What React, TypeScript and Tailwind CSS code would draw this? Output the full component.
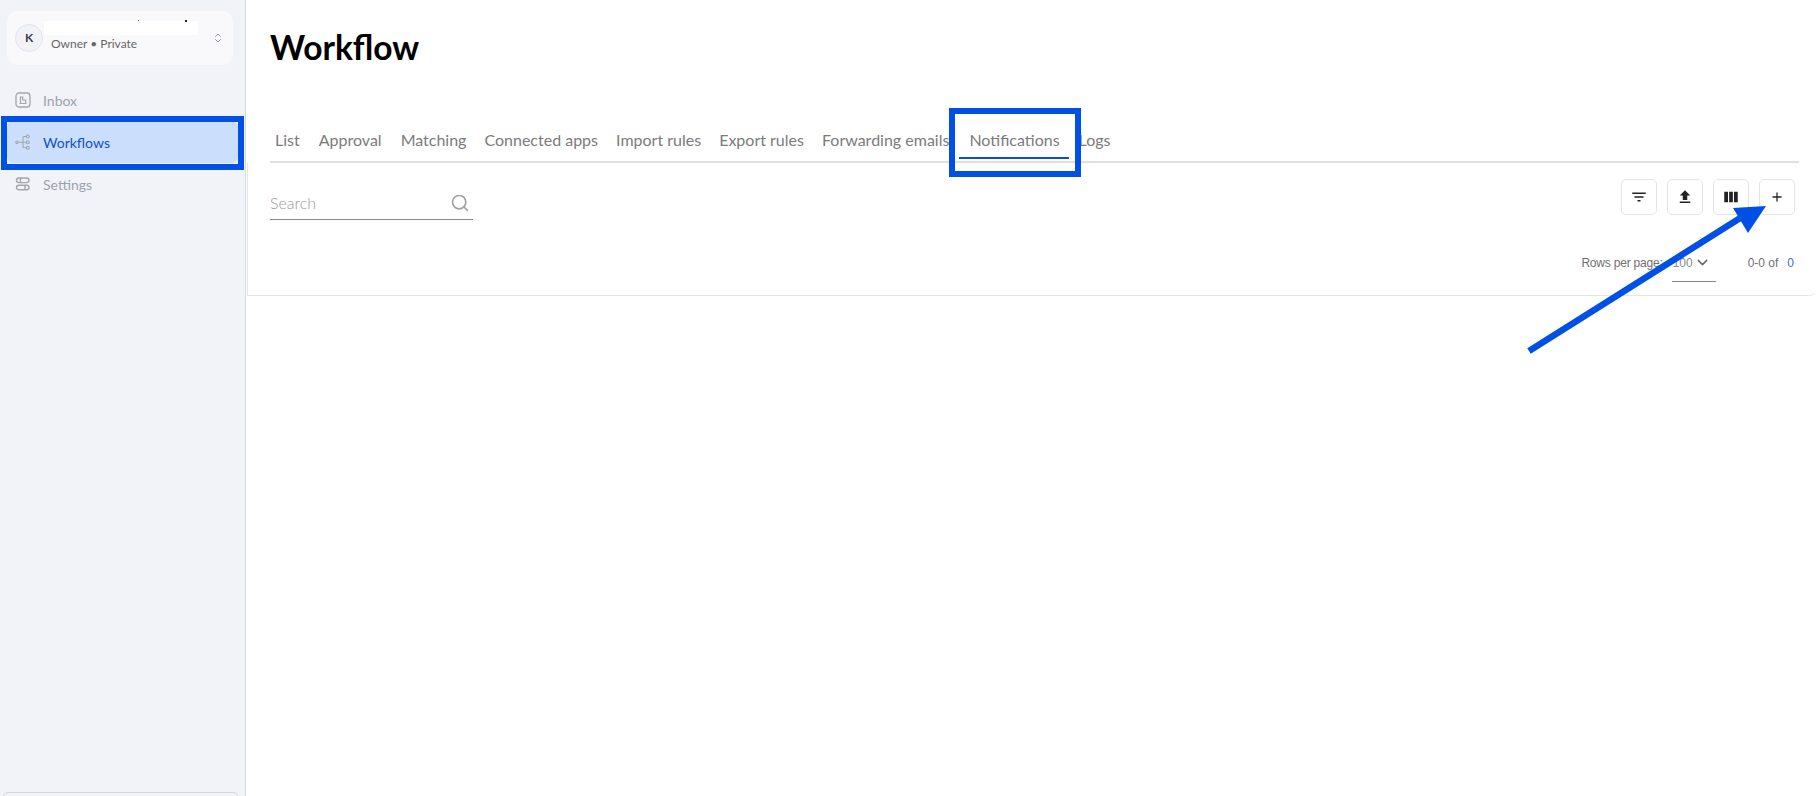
import { ChevronDown, ChevronsUpDown, Plus, Search } from 'lucide-react';

const tabs = [
  { label: 'List', ml: 'ml-[5px]' },
  { label: 'Approval', ml: 'ml-[19px]' },
  { label: 'Matching', ml: 'ml-[19px]' },
  { label: 'Connected apps', ml: 'ml-[18px]' },
  { label: 'Import rules', ml: 'ml-[18px]' },
  { label: 'Export rules', ml: 'ml-[18px]' },
  { label: 'Forwarding emails', ml: 'ml-[18px]' },
];

const InboxIcon = () => (
  <svg width="16" height="16" viewBox="0 0 16 16" fill="none" stroke="#a3a6ac">
    <rect x="1" y="1" width="14" height="14" rx="3" strokeWidth="1.3" />
    <path d="M4.5 11.5h7M5.5 11V5h2.2v3h3v3" strokeWidth="1.2" />
  </svg>
);

const FlowIcon = () => (
  <svg width="16" height="16" viewBox="0 0 16 16" fill="none" stroke="#a3a6ac" strokeWidth="1.1">
    <circle cx="2" cy="8.2" r="1.2" />
    <circle cx="12.8" cy="2.5" r="1.5" />
    <circle cx="12.8" cy="8.2" r="1.5" />
    <circle cx="12.8" cy="13.7" r="1.5" />
    <path d="M3.2 8.2h8.1M8 8.2V3.5a1 1 0 0 1 1-1h2.3M8 8.2v4.5a1 1 0 0 0 1 1h2.3" />
  </svg>
);

const SettingsIcon = () => (
  <svg width="16" height="16" viewBox="0 0 16 16" fill="none" stroke="#a3a6ac" strokeWidth="1.4">
    <rect x="1.5" y="2" width="12.5" height="4.6" rx="2.3" />
    <rect x="1.5" y="9.2" width="12.5" height="4.6" rx="2.3" />
    <path d="M5.5 2v4.6M10 9.2v4.6" />
  </svg>
);

const ToolButton = ({ children }: { children: React.ReactNode }) => (
  <button className="w-9 h-9 rounded-[5px] border border-[#e5e5e5] bg-white flex items-center justify-center text-[#222]">
    {children}
  </button>
);

export default function App() {
  return (
    <div className="relative flex w-[1816px] h-[796px] overflow-hidden bg-white font-['Lato',sans-serif]">
      <aside className="w-[246px] shrink-0 h-full bg-[#f2f3f8] border-r border-[#d5d7e0] pl-[7px] pr-[12px] pt-[11px] flex flex-col">
        <div className="h-[54px] rounded-[10px] bg-[#f9f9fb] flex items-center pl-2 pr-[9px]">
          <div className="w-7 h-7 rounded-full bg-[#f2f3f8] border border-[#e4e5eb] flex items-center justify-center text-[12px] font-bold text-[#374151] shrink-0">
            K
          </div>
          <div className="ml-2 flex-1 flex flex-col -mt-[4px]">
            <div className="relative h-[14px] w-[154px] -ml-[7px] bg-white">
              <span className="absolute left-[94px] -top-[1px] w-[1px] h-[1px] bg-[#888]" />
              <span className="absolute left-[141px] -top-[1px] w-[2px] h-[2px] bg-[#222]" />
            </div>
            <div className="text-[12px] leading-4 text-[#666] mt-[1px]">Owner • Private</div>
          </div>
          <ChevronsUpDown size={12} className="text-[#6b7280]" strokeWidth={1.5} />
        </div>
        <nav className="mt-[14px] flex flex-col gap-0">
          <div className="h-[42px] flex items-center pl-2 gap-[12px] text-[14px] text-[#9ca3af]">
            <InboxIcon />
            Inbox
          </div>
          <div className="h-[42px] -mr-[5px] flex items-center pl-2 gap-[12px] text-[14px] text-[#0b4fd0] bg-[#cbdffd] rounded-[6px]">
            <FlowIcon />
            Workflows
          </div>
          <div className="h-[42px] flex items-center pl-2 gap-[12px] text-[14px] text-[#9ca3af]">
            <SettingsIcon />
            Settings
          </div>
        </nav>
        <div className="mt-auto h-[5px] -mb-[1px] -ml-[4px] -mr-[5px] rounded-t-[6px] border-t border-x border-[#d5d7e0]" />
      </aside>

      <main className="flex-1 min-w-0 flex flex-col">
        <div className="pl-[24px] pr-[17px] pt-[25px]">
          <h1 className="text-[33.5px] leading-[44px] font-bold text-black">Workflow</h1>
          <div className="mt-[48px] h-[46px] flex items-start border-b-2 border-[#e0e0e0] pt-[11px] text-[16px] leading-6 text-[#7b7b7b] relative">
            {tabs.map((t) => (
              <span key={t.label} className={t.ml}>
                {t.label}
              </span>
            ))}
            <span className="ml-[20px] relative">
              Notifications
              <span className="absolute left-[-10px] right-[-9px] top-[29px] h-[2px] bg-[#0b4fd0]" />
            </span>
            <span className="ml-[19px]">Logs</span>
          </div>
        </div>

        <div className="ml-[1px] h-[133px] border-b border-l border-[#e6e6e6] rounded-br-[6px] pl-[22px] pr-[21px] flex flex-col">
          <div className="flex items-start justify-between pt-[16px]">
            <div className="w-[203px] h-[39px] pt-[5px] border-b border-[#8a8a8a] flex items-center justify-between mt-[2px]">
              <span className="text-[16px] font-light text-[#999]">Search</span>
              <Search size={20} className="text-[#a3a3a3] mr-[3px]" strokeWidth={2} />
            </div>
            <div className="flex gap-[10px]">
              <ToolButton>
                <svg width="18" height="18" viewBox="0 0 24 24" fill="currentColor">
                  <path d="M10 18h4v-2h-4v2zM3 6v2h18V6H3zm3 7h12v-2H6v2z" />
                </svg>
              </ToolButton>
              <ToolButton>
                <svg width="18" height="18" viewBox="0 0 24 24" fill="currentColor">
                  <path d="M5 20h14v-2H5v2zm0-10h4v6h6v-6h4l-7-7-7 7z" />
                </svg>
              </ToolButton>
              <ToolButton>
                <svg width="18" height="18" viewBox="0 0 24 24" fill="currentColor">
                  <path d="M3 5h5v14H3zM9.5 5h5v14h-5zM16 5h5v14h-5z" />
                </svg>
              </ToolButton>
              <ToolButton>
                <Plus size={14} strokeWidth={2.2} />
              </ToolButton>
            </div>
          </div>
          <div className="mt-[28px] flex items-start justify-end font-['Liberation_Sans',sans-serif] text-[12px] leading-[30px] text-[#6f6f6f]">
            <span className="tracking-[-0.2px]">Rows per page:</span>
            <div className="ml-[9px] w-[44px] h-[34px] border-b border-[#8a8a8a] flex items-start text-[#8a8a8a]">
              <span className="ml-[1px]">100</span>
              <ChevronDown size={17} className="ml-[1px] mt-[6px] text-[#666]" strokeWidth={2} />
            </div>
            <span className="ml-[32px]">0-0 of</span>
            <span className="ml-[9px] mr-[1px] text-[#3b6fc9]">0</span>
          </div>
        </div>
      </main>

      {/* annotation overlays from the screenshot */}
      <div className="absolute left-[1px] top-[116px] w-[243px] h-[54px] border-[6px] border-[#0050e6]" />
      <div className="absolute left-[949px] top-[108px] w-[132px] h-[69px] border-[6px] border-[#0050e6]" />
      <svg className="absolute left-0 top-0 pointer-events-none" width="1816" height="796" fill="none">
        <path d="M1529 351L1745 215" stroke="#0050e6" strokeWidth="6.5" />
        <path d="M1766 206L1733 208L1748 233Z" fill="#0050e6" />
      </svg>
    </div>
  );
}
